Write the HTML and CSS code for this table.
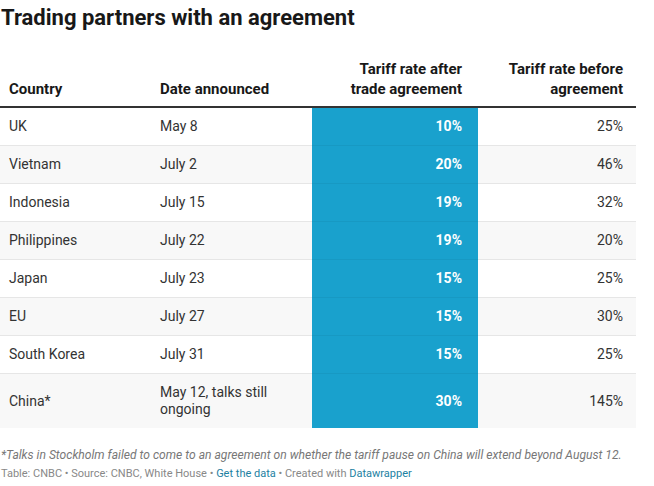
FILE: index.html
```html
<!DOCTYPE html>
<html>
<head>
<meta charset="utf-8">
<link rel="stylesheet" href="styles.css">
</head>
<body>
<div class="chart">
  <h1 class="title">Trading partners with an agreement</h1>
  <table class="tbl">
    <colgroup>
      <col class="w-country"><col class="w-date"><col class="w-after"><col class="w-before">
    </colgroup>
    <thead>
      <tr>
        <th class="c-country">Country</th>
        <th class="c-date">Date announced</th>
        <th class="c-after">Tariff rate after<br>trade agreement</th>
        <th class="c-before">Tariff rate before<br>agreement</th>
      </tr>
    </thead>
    <tbody>
      <tr><td class="c-country">UK</td><td class="c-date">May 8</td><td class="c-after">10%</td><td class="c-before">25%</td></tr>
      <tr class="alt"><td class="c-country">Vietnam</td><td class="c-date">July 2</td><td class="c-after">20%</td><td class="c-before">46%</td></tr>
      <tr><td class="c-country">Indonesia</td><td class="c-date">July 15</td><td class="c-after">19%</td><td class="c-before">32%</td></tr>
      <tr class="alt"><td class="c-country">Philippines</td><td class="c-date">July 22</td><td class="c-after">19%</td><td class="c-before">20%</td></tr>
      <tr><td class="c-country">Japan</td><td class="c-date">July 23</td><td class="c-after">15%</td><td class="c-before">25%</td></tr>
      <tr class="alt"><td class="c-country">EU</td><td class="c-date">July 27</td><td class="c-after">15%</td><td class="c-before">30%</td></tr>
      <tr><td class="c-country">South Korea</td><td class="c-date">July 31</td><td class="c-after">15%</td><td class="c-before">25%</td></tr>
      <tr class="alt"><td class="c-country">China*</td><td class="c-date">May 12, talks still<br>ongoing</td><td class="c-after">30%</td><td class="c-before">145%</td></tr>
    </tbody>
  </table>
  <p class="note">*Talks in Stockholm failed to come to an agreement on whether the tariff pause on China will extend beyond August 12.</p>
  <p class="source">Table: CNBC • Source: CNBC, White House • <a class="link">Get the data</a> • Created with <a class="link">Datawrapper</a></p>
</div>
</body>
</html>
```

FILE: styles.css
```css
html, body {
  margin: 0;
  padding: 0;
  background: #ffffff;
}
body {
  font-family: Roboto, "Liberation Sans", sans-serif;
  color: #333333;
}
.chart {
  width: 636px;
}
.title {
  margin: 5px 0 0 1px;
  font-size: 22px;
  line-height: 26px;
  font-weight: 700;
  color: #181818;
}
.tbl {
  margin-top: 28px;
  width: 636px;
  border-collapse: collapse;
  table-layout: fixed;
  font-size: 14px;
}
.w-country { width: 151px; }
.w-date { width: 161px; }
.w-after { width: 166px; }
.w-before { width: 158px; }
.tbl th, .tbl td {
  box-sizing: border-box;
}
.tbl th {
  font-size: 15px;
  font-weight: 700;
  color: #181818;
  line-height: 20px;
  padding: 0 0 7px 0;
  vertical-align: bottom;
  border-bottom: 2px solid #333333;
}
.tbl td {
  line-height: 17px;
  padding: 10px 0;
  border-bottom: 1px solid #e6e6e6;
  color: #333333;
}
.tbl tbody tr:last-child td {
  border-bottom: none;
}
.tbl tr.alt td {
  background: #f8f8f8;
}
.tbl .c-country, .tbl .c-date {
  text-align: left;
  padding-left: 9px;
}
.tbl .c-after {
  text-align: right;
  padding-right: 16px;
}
.tbl .c-before {
  text-align: right;
  padding-right: 13px;
}
.tbl td.c-after, .tbl tr.alt td.c-after {
  background: #19a1cd;
  color: #ffffff;
  font-weight: 700;
  border-bottom-color: #1799c3;
}
.note {
  margin: 19px 0 0 1px;
  font-size: 12.1px;
  line-height: 16px;
  font-style: italic;
  color: #777777;
}
.source {
  margin: 3px 0 0 1px;
  font-size: 11px;
  line-height: 15px;
  color: #888888;
}
.link {
  color: #1d81a2;
  text-decoration: none;
}
```
